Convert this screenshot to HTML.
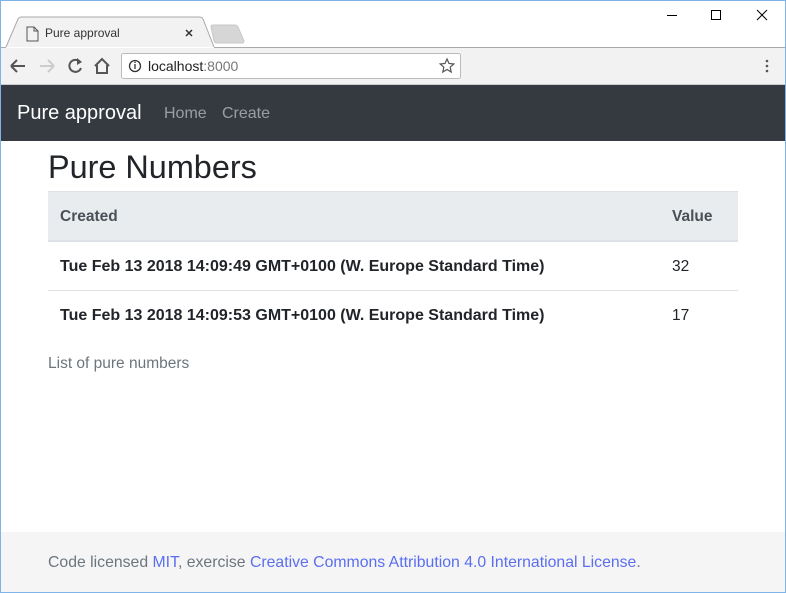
<!DOCTYPE html>
<html><head><meta charset="utf-8"><style>
*{box-sizing:border-box;margin:0;padding:0}
body{width:786px;height:593px;overflow:hidden;font-family:"Liberation Sans",sans-serif;background:#fff;position:relative}
.frame{position:absolute;inset:0;border:1px solid #7eb4ea;pointer-events:none;z-index:10}
.abs{position:absolute;white-space:nowrap}
</style></head><body>
<div class="frame"></div>
<div class="abs" style="left:0;top:0;width:786px;height:47px;background:#fff"></div>
<svg class="abs" style="left:0;top:0" width="786" height="50">
<path d="M6 47 L18 19 Q19 17 22 17 L199 17 Q202 17 203 19 L214 47" fill="#f2f2f2" stroke="#aaa"/>
<path d="M211 27 Q211 25 213 25 L235 25 Q237 25 238 27 L244 41 Q244 43 242 43 L217 43 Q215 43 214 41Z" fill="#d6d6d6" stroke="#c8c8c8"/>
<line x1="0" y1="47.5" x2="6" y2="47.5" stroke="#aaa"/><line x1="214" y1="47.5" x2="786" y2="47.5" stroke="#aaa"/>
<path d="M27 27 h7 l4 4 v10 h-11z M34 27 v4 h4" fill="none" stroke="#555"/>
<path d="M186 30 l6 6 M192 30 l-6 6" stroke="#333" stroke-width="1.5"/>
<line x1="667" y1="15.5" x2="677" y2="15.5" stroke="#000"/>
<rect x="711.5" y="10.5" width="9" height="9" fill="none" stroke="#000"/>
<path d="M757 10 l10 10 M767 10 l-10 10" stroke="#000"/>
</svg>
<div class="abs" style="left:45px;top:26px;font-size:12px;color:#333">Pure approval</div>
<div class="abs" style="left:0;top:48px;width:786px;height:37px;background:#f2f2f2;border-bottom:1px solid #ccc"></div>
<svg class="abs" style="left:0;top:48px" width="786" height="37">
<path d="M11 18 h14 M11 18 l6 -6 M11 18 l6 6" stroke="#555" stroke-width="2" fill="none"/>
<path d="M40 18 h14 M54 18 l-6 -6 M54 18 l-6 6" stroke="#ccc" stroke-width="2" fill="none"/>
<path d="M80 14 A6 6 0 1 0 81 20" stroke="#555" stroke-width="2" fill="none"/><path d="M77 10 l5 4 -5 3z" fill="#555"/>
<path d="M95 18 l7 -7 7 7 M97 17 v8 h10 v-8" stroke="#555" stroke-width="2" fill="none"/>
<rect x="121.5" y="5.5" width="339" height="25" rx="2" fill="#fff" stroke="#bbb"/>
<circle cx="135" cy="18" r="5.5" fill="none" stroke="#333" stroke-width="1.3"/><line x1="135" y1="16" x2="135" y2="21" stroke="#333" stroke-width="1.3"/><circle cx="135" cy="14.3" r=".8" fill="#333"/>
<path d="M447 11 l2 4.5 4.8 .5 -3.6 3.2 1 4.8 -4.2 -2.5 -4.2 2.5 1 -4.8 -3.6 -3.2 4.8 -.5z" fill="none" stroke="#555" stroke-width="1.2"/>
<circle cx="767" cy="13" r="1.3" fill="#555"/><circle cx="767" cy="18" r="1.3" fill="#555"/><circle cx="767" cy="23" r="1.3" fill="#555"/>
</svg>
<div class="abs" style="left:148px;top:58px;font-size:14px;color:#222">localhost<span style="color:#777">:8000</span></div>
<div class="abs" style="left:0;top:85px;width:786px;height:56px;background:#343a40"></div>
<div class="abs" style="left:17px;top:102px;font-size:20px;color:#fff">Pure approval</div>
<div class="abs" style="left:164px;top:105px;font-size:16px;color:rgba(255,255,255,.5)">Home</div>
<div class="abs" style="left:222px;top:105px;font-size:16px;color:rgba(255,255,255,.5)">Create</div>
<div class="abs" style="left:48px;top:149px;font-size:32.4px;color:#212529">Pure Numbers</div>
<div class="abs" style="left:48px;top:191px;width:690px;height:51px;background:#e9ecef;border-top:1px solid #dee2e6;border-bottom:2px solid #dee2e6"></div>
<div class="abs" style="left:60px;top:208px;font-size:15.5px;font-weight:bold;color:#495057">Created</div>
<div class="abs" style="left:672px;top:208px;font-size:15.5px;font-weight:bold;color:#495057">Value</div>
<div class="abs" style="left:48px;top:290px;width:690px;height:1px;background:#dee2e6"></div>
<div class="abs" style="left:60px;top:258px;font-size:16px;font-weight:bold;color:#212529">Tue Feb 13 2018 14:09:49 GMT+0100 (W. Europe Standard Time)</div>
<div class="abs" style="left:672px;top:258px;font-size:15.5px;color:#212529">32</div>
<div class="abs" style="left:60px;top:307px;font-size:16px;font-weight:bold;color:#212529">Tue Feb 13 2018 14:09:53 GMT+0100 (W. Europe Standard Time)</div>
<div class="abs" style="left:672px;top:307px;font-size:15.5px;color:#212529">17</div>
<div class="abs" style="left:48px;top:355px;font-size:15.5px;color:#6c757d">List of pure numbers</div>
<div class="abs" style="left:0;top:532px;width:786px;height:61px;background:#f5f5f5"></div>
<div class="abs" style="left:48px;top:554px;font-size:15.8px;color:#6c757d">Code licensed <span style="color:#5b6ef0">MIT</span>, exercise <span style="color:#5b6ef0">Creative Commons Attribution 4.0 International License</span>.</div>
</body></html>
